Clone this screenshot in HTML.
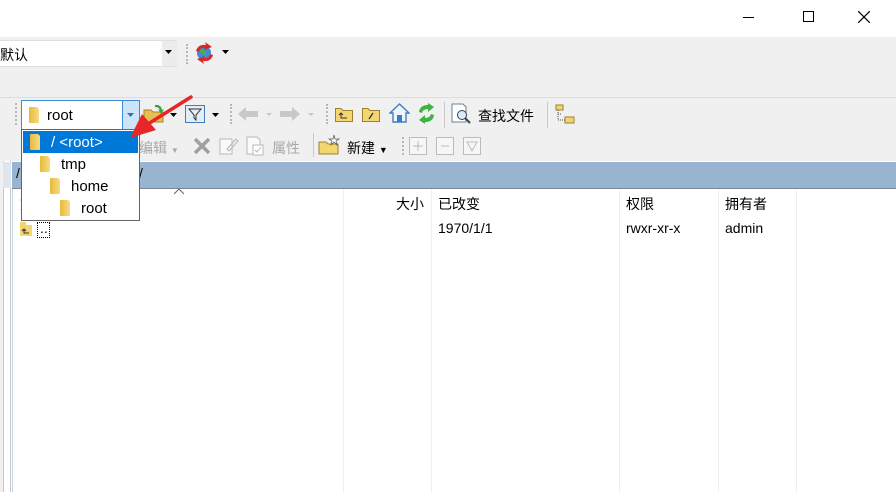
<!DOCTYPE html>
<html><head><meta charset="utf-8"><style>
*{margin:0;padding:0;box-sizing:border-box}
body{width:896px;height:492px;overflow:hidden;background:#fff;font-family:"Liberation Sans","Noto Sans CJK SC",sans-serif;font-size:14px;color:#000;position:relative}
.a{position:absolute}
.fold{position:absolute;width:10px;height:16px;background:linear-gradient(90deg,#e8b93a,#f8dc82);border-radius:1px 3px 1px 1px}
.t{position:absolute;white-space:nowrap}
.grip{position:absolute;width:3px;border-left:2px dotted #b8b8b8}
.dis{color:#a8a8a8}
</style></head><body>
<div class="a" style="left:0;top:0;width:896px;height:37px;background:#fff"></div>
<div class="a" style="left:743px;top:17px;width:11px;height:1px;background:#000"></div>
<div class="a" style="left:803px;top:11px;width:11px;height:11px;border:1px solid #000"></div>
<svg class="a" style="left:858px;top:11px" width="12" height="12"><path d="M0 0L12 12M12 0L0 12" stroke="#000" stroke-width="1.2"/></svg>
<div class="a" style="left:0;top:37px;width:896px;height:60px;background:#f0f0f0"></div>
<div class="a" style="left:0;top:40px;width:177px;height:27px;background:#fff;border:1px solid #e0e0e0;border-left:none"></div>
<div class="a" style="left:162px;top:41px;width:15px;height:25px;background:#ececec"></div>
<div class="t" style="left:0;top:45px">默认</div>
<svg class="a" style="left:165px;top:50px" width="8" height="5"><path d="M0 0H7L3.5 4Z" fill="#000"/></svg>
<div class="grip" style="left:186px;top:44px;height:20px"></div>
<svg class="a" style="left:193px;top:42px" width="24" height="22"><circle cx="11" cy="11" r="7" fill="#3d8fd4"/><path d="M6 9q3-3 7 0q-2 4 2 6" fill="#4caf50"/><path d="M3 9Q5 2 13 3L12 0L19 5L11 8L12 6Q7 5 6 10Z" fill="#d42a2a"/><path d="M20 13Q18 20 10 19L11 22L4 17L12 14L11 16Q16 17 17 12Z" fill="#d42a2a"/></svg>
<svg class="a" style="left:222px;top:50px" width="8" height="5"><path d="M0 0H7L3.5 4Z" fill="#000"/></svg>
<div class="a" style="left:0;top:97px;width:896px;height:1px;background:#dcdcdc"></div>
<div class="a" style="left:0;top:98px;width:896px;height:63px;background:#f0f0f0"></div>
<div class="grip" style="left:15px;top:103px;height:22px"></div>
<div class="a" style="left:21px;top:100px;width:119px;height:30px;background:#fff;border:1px solid #3f8bd6"></div>
<div class="a" style="left:122px;top:101px;width:17px;height:28px;background:#cde3f7;border-left:1px solid #3f8bd6"></div>
<svg class="a" style="left:127px;top:113px" width="8" height="5"><path d="M0 0H7L3.5 4Z" fill="#3b6fa8"/></svg>
<div class="fold" style="left:29px;top:107px"></div>
<div class="t" style="left:47px;top:107px;font-size:15px">root</div>
<svg class="a" style="left:143px;top:104px" width="24" height="20"><path d="M1 6H8L10 8H20V18H1Z" fill="#e8c050" stroke="#a88420"/><path d="M12 1Q18 0 19 6L21 5L18 10L15 5L17 6Q16 3 12 3Z" fill="#3aa43a"/></svg>
<svg class="a" style="left:170px;top:113px" width="8" height="5"><path d="M0 0H7L3.5 4Z" fill="#000"/></svg>
<svg class="a" style="left:185px;top:105px" width="20" height="18"><rect x="0.5" y="0.5" width="19" height="17" fill="#e4eef9" stroke="#3f7fc0"/><path d="M4 4H16L11 10V15L9 13V10Z" fill="none" stroke="#333"/></svg>
<svg class="a" style="left:212px;top:113px" width="8" height="5"><path d="M0 0H7L3.5 4Z" fill="#000"/></svg>
<div class="grip" style="left:230px;top:104px;height:20px"></div>
<svg class="a" style="left:238px;top:106px" width="84" height="16"><g fill="#c8c8c8"><path d="M0 8L8 1V5H20V11H8V15Z"/><path d="M28 8H34L31 11Z" transform="translate(0,-1)"/><path d="M62 8L54 1V5H42V11H54V15Z"/><path d="M70 7H76L73 10Z"/></g></svg>
<div class="grip" style="left:326px;top:104px;height:20px"></div>
<svg class="a" style="left:335px;top:105px" width="18" height="17"><path d="M0.5 3.5H6L8 5.5H17.5V16.5H0.5Z" fill="#f3d66e" stroke="#9d8030"/><path d="M6 8V13H12M4 10L6 8L8 10" fill="none" stroke="#333"/></svg>
<svg class="a" style="left:362px;top:105px" width="18" height="17"><path d="M0.5 3.5H6L8 5.5H17.5V16.5H0.5Z" fill="#f3d66e" stroke="#9d8030"/><path d="M11 8L7 14" stroke="#333" stroke-width="1.3"/></svg>
<svg class="a" style="left:389px;top:103px" width="21" height="20"><path d="M10.5 1L1 10H4V19H17V10H20Z" fill="#eef4fb" stroke="#3f7fc0" stroke-width="1.4"/><rect x="8" y="12" width="5" height="7" fill="#3b7cc4"/></svg>
<svg class="a" style="left:416px;top:103px" width="21" height="21"><path d="M3 9Q4 2 12 2V0L18 4L12 9V6Q7 6 6 10Z" fill="#3fb23f"/><path d="M18 12Q17 19 9 19V21L3 17L9 12V15Q14 15 15 11Z" fill="#3fb23f"/></svg>
<div class="a" style="left:444px;top:102px;width:1px;height:26px;background:#c8c8c8"></div>
<svg class="a" style="left:451px;top:103px" width="22" height="22"><path d="M1 1H12L15 4V19H1Z" fill="#fff" stroke="#6a7f95"/><circle cx="11" cy="12" r="4.5" fill="#dbe9f6" stroke="#345"/><path d="M14 15L19 20" stroke="#345" stroke-width="2"/></svg>
<div class="t" style="left:478px;top:106px">查找文件</div>
<div class="a" style="left:547px;top:102px;width:1px;height:26px;background:#c8c8c8"></div>
<svg class="a" style="left:555px;top:104px" width="20" height="20"><rect x="1" y="1" width="7" height="5" fill="#f3d66e" stroke="#9d8030"/><rect x="10" y="13" width="9" height="6" fill="#f3d66e" stroke="#9d8030"/><path d="M3 6V16H10M3 10H7" stroke="#555" stroke-dasharray="1 1" fill="none"/></svg>
<div class="t dis" style="left:139px;top:138px">编辑 <span style="font-size:8px">▼</span></div>
<svg class="a" style="left:193px;top:137px" width="18" height="18"><path d="M2 2L16 16M16 2L2 16" stroke="#a0a0a0" stroke-width="3.5"/></svg>
<svg class="a" style="left:219px;top:136px" width="20" height="20"><path d="M1 3H13V18H1Z" fill="#fafafa" stroke="#b8b8b8"/><path d="M8 13L17 3L19 5L10 15Z" fill="none" stroke="#b8b8b8"/></svg>
<svg class="a" style="left:246px;top:136px" width="20" height="20"><path d="M1 1H11L14 4V18H1Z" fill="#fafafa" stroke="#b8b8b8"/><rect x="7" y="9" width="10" height="10" fill="#fff" stroke="#b8b8b8"/><path d="M9 14L11 16L15 11" stroke="#b8b8b8" fill="none"/></svg>
<div class="t dis" style="left:272px;top:138px">属性</div>
<div class="a" style="left:313px;top:133px;width:1px;height:24px;background:#c8c8c8"></div>
<svg class="a" style="left:318px;top:134px" width="24" height="22"><path d="M1 8H8L10 10H20V20H1Z" fill="#f3d66e" stroke="#9d8030"/><path d="M16 1L17 5L21 5L18 7L19 11L16 8L13 11L14 7L11 5L15 5Z" fill="#fff" stroke="#555" stroke-width=".7"/></svg>
<div class="t" style="left:347px;top:138px">新建 <span style="font-size:9px">▼</span></div>
<div class="grip" style="left:402px;top:137px;height:18px"></div>
<svg class="a" style="left:409px;top:137px" width="80" height="18"><g fill="#f6f6f6" stroke="#bcbcbc"><rect x=".5" y=".5" width="17" height="17"/><rect x="27.5" y=".5" width="17" height="17"/><rect x="54.5" y=".5" width="17" height="17"/></g><path d="M9 4V14M4 9H14M32 9H40M58 5H68L63 14Z" stroke="#bcbcbc" fill="none"/></svg>
<div class="a" style="left:0;top:161px;width:11px;height:331px;background:#f0f0f0"></div>
<div class="a" style="left:3px;top:161px;width:8px;height:331px;background:#fff;border-left:1px solid #c8c8c8;border-right:1px solid #c8c8c8"></div>
<div class="a" style="left:3px;top:162px;width:8px;height:26px;background:#dde6f0"></div>
<div class="a" style="left:12px;top:162px;width:884px;height:26px;background:#98b4d1"></div>
<div class="t" style="left:16px;top:165px">/</div>
<div class="t" style="left:139px;top:165px">/</div>
<div class="a" style="left:12px;top:188px;width:884px;height:1px;background:#7a8899"></div>
<div class="a" style="left:12px;top:189px;width:1px;height:303px;background:#c8d4e0"></div>
<div class="a" style="left:343px;top:189px;width:1px;height:303px;background:#eceff2"></div>
<div class="a" style="left:431px;top:189px;width:1px;height:303px;background:#eceff2"></div>
<div class="a" style="left:619px;top:189px;width:1px;height:303px;background:#eceff2"></div>
<div class="a" style="left:718px;top:189px;width:1px;height:303px;background:#eceff2"></div>
<div class="a" style="left:796px;top:189px;width:1px;height:303px;background:#eceff2"></div>
<svg class="a" style="left:174px;top:189px" width="10" height="6"><path d="M0 5L5 0L10 5" fill="none" stroke="#666"/></svg>
<div class="t" style="left:396px;top:194px">大小</div>
<div class="t" style="left:438px;top:194px">已改变</div>
<div class="t" style="left:626px;top:194px">权限</div>
<div class="t" style="left:725px;top:194px">拥有者</div>
<div class="t" style="left:20px;top:194px">文</div>
<svg class="a" style="left:20px;top:222px" width="12" height="14"><path d="M0 0H6V3H12V14H0Z" fill="#f3d66e"/><path d="M4 7V11H9M2 9L4 7L6 9" stroke="#333" fill="none"/></svg>
<div class="a" style="left:37px;top:222px;width:13px;height:16px;border:1px dotted #000"></div>
<div class="t" style="left:40px;top:220px">..</div>
<div class="t" style="left:438px;top:220px">1970/1/1</div>
<div class="t" style="left:626px;top:220px">rwxr-xr-x</div>
<div class="t" style="left:725px;top:220px">admin</div>
<div class="a" style="left:21px;top:129px;width:119px;height:92px;background:#fff;border:1px solid #646464"></div>
<div class="a" style="left:23px;top:131px;width:115px;height:22px;background:#0078d7"></div>
<div class="fold" style="left:30px;top:134px"></div>
<div class="t" style="left:51px;top:134px;font-size:15px;color:#fff">/ &lt;root&gt;</div>
<div class="fold" style="left:40px;top:156px"></div>
<div class="t" style="left:61px;top:156px;font-size:15px">tmp</div>
<div class="fold" style="left:50px;top:178px"></div>
<div class="t" style="left:71px;top:178px;font-size:15px">home</div>
<div class="fold" style="left:60px;top:200px"></div>
<div class="t" style="left:81px;top:200px;font-size:15px">root</div>
<svg class="a" style="left:120px;top:94px" width="75" height="50"><path d="M71 3L28 30" stroke="#e5262a" stroke-width="3.5" stroke-linecap="round"/><path d="M10 44L22 20L36 36Z" fill="#e5262a"/></svg>
</body></html>
